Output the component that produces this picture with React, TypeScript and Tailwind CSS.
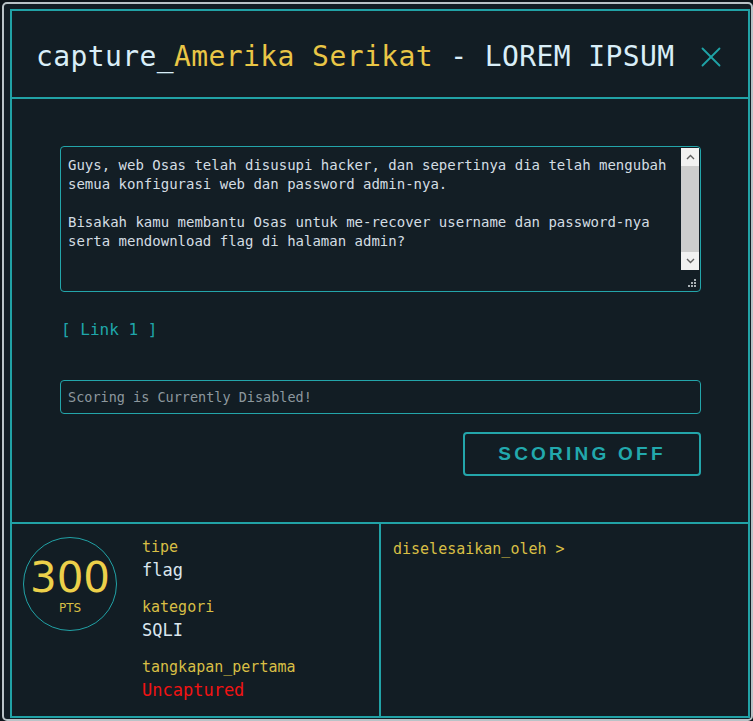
import { X } from "lucide-react";

const mono = { fontFamily: '"DejaVu Sans Mono", "Liberation Mono", monospace' };

function Field({ label, value, danger }: { label: string; value: string; danger?: boolean }) {
  return (
    <div className="flex flex-col">
      <span className="text-[15px] leading-[20px] text-[#d8bf45]">{label}</span>
      <span className={`mt-[2px] text-[17px] leading-[22px] ${danger ? "text-[#f01313]" : "text-[#dbe7ef]"}`}>
        {value}
      </span>
    </div>
  );
}

export default function App() {
  return (
    <div className="min-h-screen bg-[#0d151a] pt-[2px] pl-[2px]" style={mono}>
      <div className="h-[719px] w-[751px] rounded-[5px] border-2 border-[#b9c3c7] bg-[#121d24] pt-[5px] pl-[6px] pr-[1px] pb-[1px]">
        <div className="flex h-full flex-col border-2 border-[#21a2a6]">
          {/* header */}
          <div className="flex h-[88px] shrink-0 items-center justify-between border-b-2 border-[#21a2a6] pl-[24px] pr-[20px] pt-[5px]">
            <h1 className="text-[28px] leading-none tracking-[0.4px] text-[#d9eef8]">
              capture_<span className="text-[#e9c646]">Amerika Serikat</span> - LOREM IPSUM
            </h1>
            <X className="h-[34px] w-[34px] text-[#1fa3a7]" strokeWidth={1.3} />
          </div>

          {/* body */}
          <div className="flex flex-1 flex-col pl-[48px] pr-[47px] pt-[47px]">
            <div className="relative h-[146px] rounded-[4px] border border-[#23a5aa] bg-[#131e25]">
              <div className="whitespace-pre-wrap pl-[7px] pr-[24px] pt-[9px] text-[14px] leading-[19px] text-[#d3dde3]">
                {"Guys, web Osas telah disusupi hacker, dan sepertinya dia telah mengubah\nsemua konfigurasi web dan password admin-nya.\n\nBisakah kamu membantu Osas untuk me-recover username dan password-nya\nserta mendownload flag di halaman admin?"}
              </div>
              <div className="absolute right-[1px] top-[1px] flex h-[122px] w-[18px] flex-col bg-[#f1f1f1]">
                <div className="flex h-[18px] items-center justify-center">
                  <svg width="9" height="6" viewBox="0 0 9 6">
                    <path d="M1 5 L4.5 1.5 L8 5" fill="none" stroke="#5f5f5f" strokeWidth="1.4" />
                  </svg>
                </div>
                <div className="flex-1 bg-[#cdcdcd]" />
                <div className="flex h-[18px] items-center justify-center">
                  <svg width="9" height="6" viewBox="0 0 9 6">
                    <path d="M1 1 L4.5 4.5 L8 1" fill="none" stroke="#5f5f5f" strokeWidth="1.4" />
                  </svg>
                </div>
              </div>
              <svg className="absolute bottom-[3px] right-[3px]" width="9" height="9" viewBox="0 0 9 9">
                <g fill="#a9b1b5">
                  <rect x="6" y="0" width="2" height="2" />
                  <rect x="3" y="3" width="2" height="2" />
                  <rect x="6" y="3" width="2" height="2" />
                  <rect x="0" y="6" width="2" height="2" />
                  <rect x="3" y="6" width="2" height="2" />
                  <rect x="6" y="6" width="2" height="2" />
                </g>
              </svg>
            </div>

            <a className="mt-[27px] self-start pl-[1px] text-[16px] leading-[22px] text-[#1fa6ab]">[ Link 1 ]</a>

            <div className="mt-[39px] flex h-[34px] items-center rounded-[4px] border border-[#23a5aa] px-[7px] text-[13.5px] text-[#8d989e]">
              Scoring is Currently Disabled!
            </div>

            <div className="mt-[18px] flex justify-end">
              <button
                className="h-[44px] w-[238px] rounded-[4px] border-2 border-[#23a5aa] text-[19px] font-bold tracking-[0.17em] text-[#22a9ad]"
                style={{ fontFamily: '"Liberation Sans", sans-serif' }}
              >
                SCORING OFF
              </button>
            </div>
          </div>

          {/* footer */}
          <div className="flex h-[194px] shrink-0 border-t-2 border-[#21a2a6]">
            <div className="flex w-[369px] shrink-0 border-r-2 border-[#21a2a6] pl-[11px] pt-[13px]">
              <div className="flex h-[94px] w-[94px] shrink-0 flex-col items-center justify-center rounded-full border border-[#21a2a6]">
                <span
                  className="mt-[2px] text-[42px] leading-[42px] text-[#ecd04a]"
                  style={{ fontFamily: '"DejaVu Sans", sans-serif' }}
                >
                  300
                </span>
                <span className="mt-[3px] text-[12px] leading-none text-[#d8bf45]" style={{ fontFamily: '"DejaVu Sans", sans-serif' }}>
                  PTS
                </span>
              </div>
              <div className="ml-[25px] flex flex-col gap-[16px] pt-0">
                <Field label="tipe" value="flag" />
                <Field label="kategori" value="SQLI" />
                <Field label="tangkapan_pertama" value="Uncaptured" danger />
              </div>
            </div>
            <div className="flex-1 pl-[12px] pt-[13px]">
              <span className="text-[15px] leading-[20px] text-[#d8bf45]">diselesaikan_oleh &gt;</span>
            </div>
          </div>
        </div>
      </div>
    </div>
  );
}
